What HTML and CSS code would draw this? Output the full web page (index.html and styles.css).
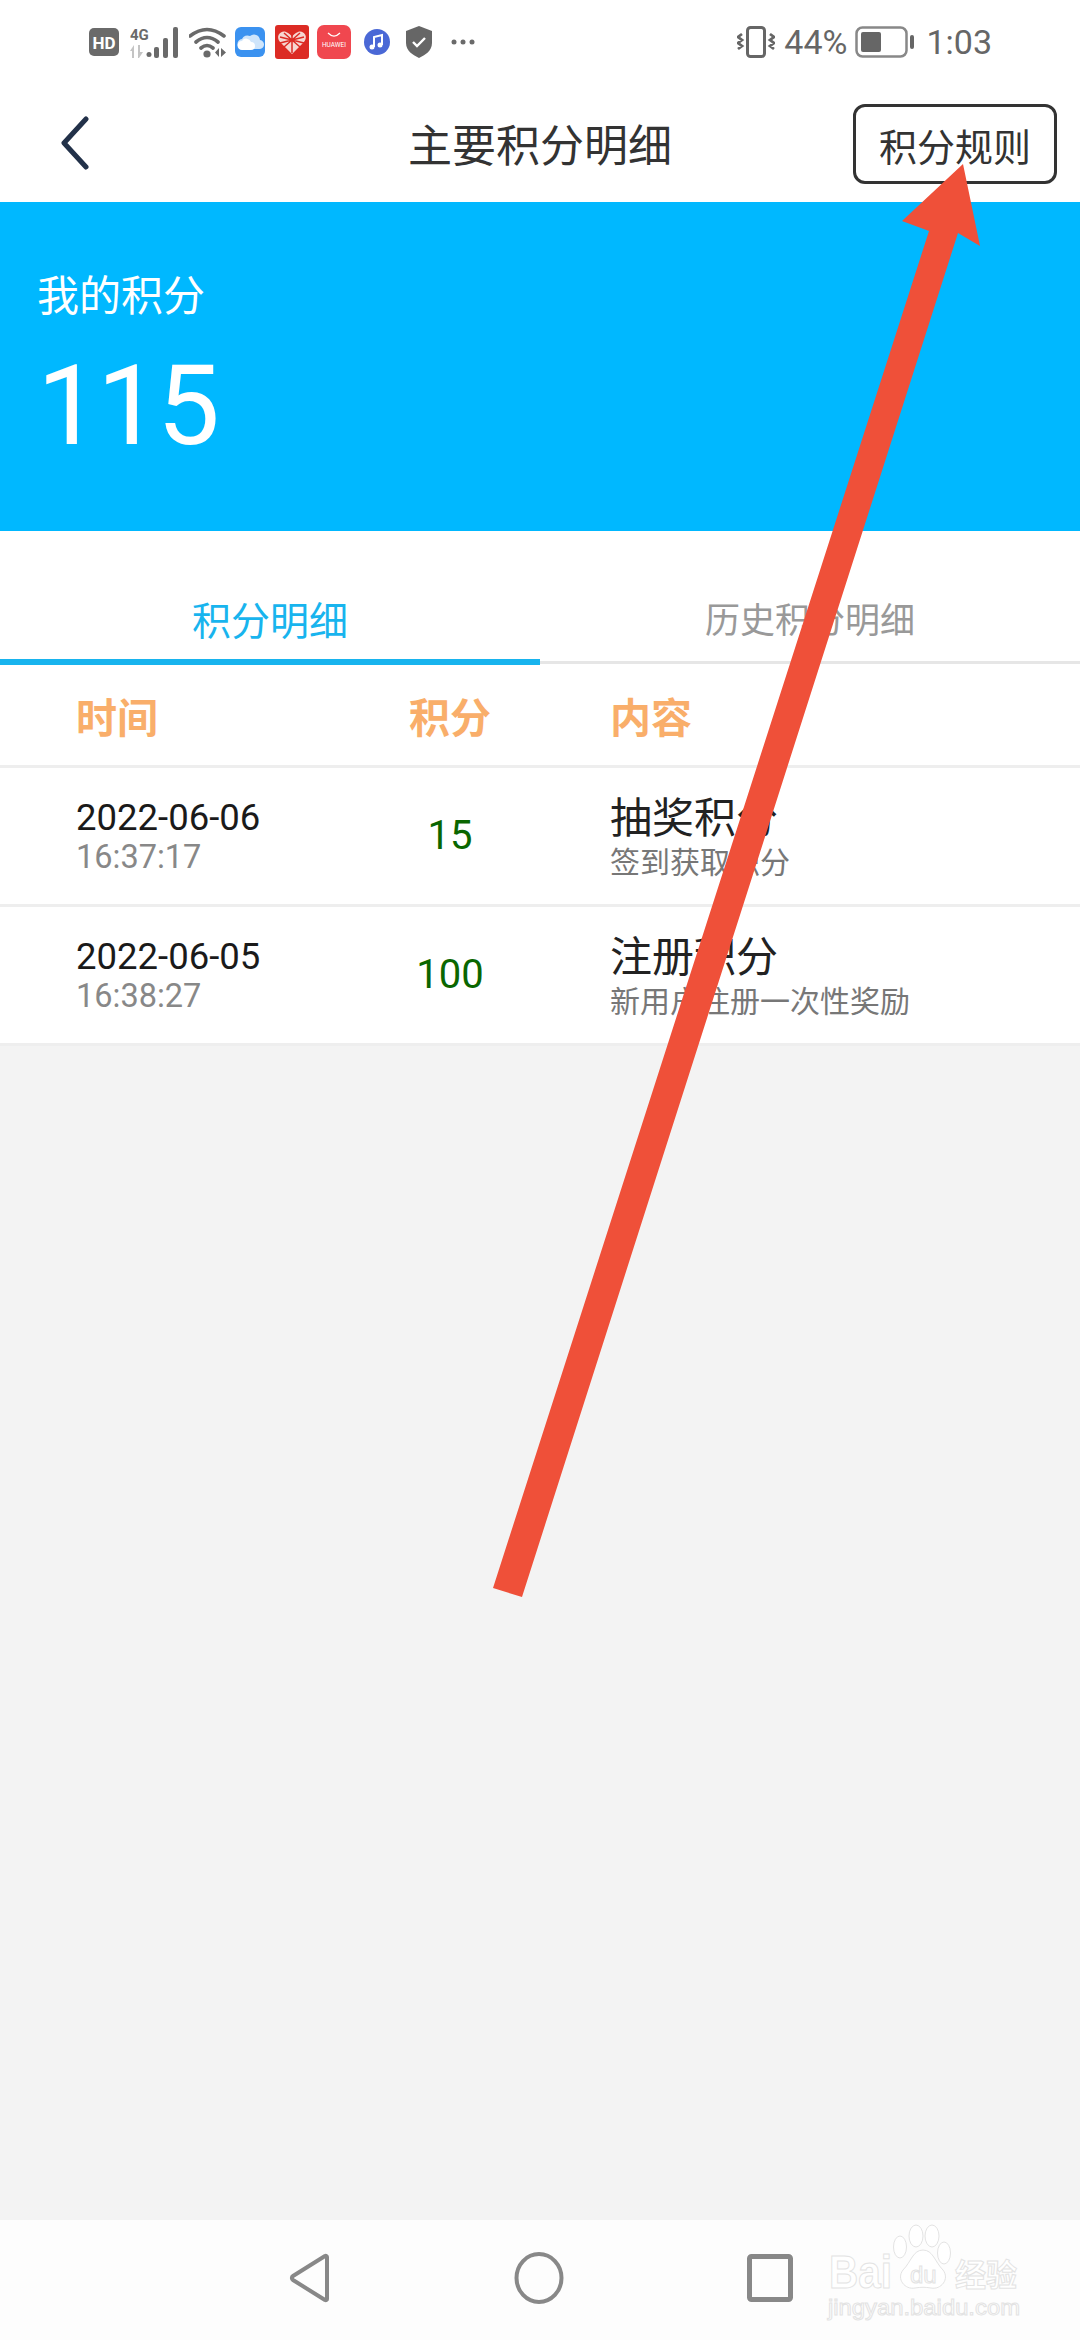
FILE: index.html
```html
<!DOCTYPE html>
<html lang="zh-CN">
<head>
<meta charset="utf-8">
<title>主要积分明细</title>
<link rel="stylesheet" href="styles.css">
</head>
<body>
<div class="page">
  <div class="status">
    <div class="status-left">
      <svg class="ic-hd" width="30" height="28" viewBox="0 0 30 28"><rect width="30" height="28" rx="5" fill="#6a6a6a"/><text x="15" y="20.500" text-anchor="middle" class="svg-hd">HD</text></svg>
      <svg class="ic-signal" width="50" height="32" viewBox="0 0 50 32"><text x="0" y="14" class="svg-4g">4G</text><path d="M0 25l4-6v13h-2v-7zM8 19h2v7l3 0-4 6h-1z" fill="#c4c4c4"/><circle cx="19" cy="28.500" r="2.500" fill="#6a6a6a"/><rect x="24" y="21" width="5" height="11" rx="2" fill="#6a6a6a"/><rect x="33" y="12" width="5" height="20" rx="2" fill="#6a6a6a"/><rect x="43" y="1" width="5" height="31" rx="2" fill="#6a6a6a"/></svg>
      <svg class="ic-wifi" width="38" height="32" viewBox="0 0 38 32"><path d="M1 10Q18-3 35 10M7 16Q18 7 29 16M12 22Q18 17 24 22" stroke="#6a6a6a" stroke-width="3.600" fill="none" stroke-linecap="round"/><circle cx="18" cy="28" r="3.600" fill="#6a6a6a"/><path d="M30 22v9l-4-4.500zM32 22v9l5-4.500z" fill="#6a6a6a"/></svg>
      <svg class="ic-cloud" width="30" height="30" viewBox="0 0 30 30"><rect width="30" height="30" rx="6" fill="#3b92f0"/><path d="M8 22a5 5 0 0 1-1-10 6 6 0 0 1 8-3 6 6 0 0 1 10 4 4.500 4.500 0 0 1-1 9z" fill="#cfe5fb"/><path d="M7 23a4.500 4.500 0 0 1 0-9 5 5 0 0 1 9 1 4 4 0 0 1 0 8z" fill="#fff"/></svg>
      <svg class="ic-heart" width="34" height="34" viewBox="0 0 34 34"><rect width="34" height="34" rx="3" fill="#dc2b24"/><path d="M17 29 5 17c-5-6 1-12 6-10 3 1 5 3 6 5 1-2 3-4 6-5 5-2 11 4 6 10z" fill="#f6d7d2"/><path d="M17 8v20M9 8l16 14M25 8 9 22M5 12l24 6M29 12 5 18" stroke="#dc2b24" stroke-width="1.500" fill="none"/></svg>
      <svg class="ic-huawei" width="34" height="34" viewBox="0 0 34 34"><rect width="34" height="34" rx="7" fill="#f0474f"/><path d="M11 8q6 6 12 0" stroke="#fff" stroke-width="1.200" fill="none"/><text x="17" y="22" text-anchor="middle" class="svg-hw">HUAWEI</text></svg>
      <svg class="ic-music" width="28" height="28" viewBox="0 0 28 28"><circle cx="14" cy="14" r="13" fill="#4a68d6"/><path d="M11 19V9l8-2v10" stroke="#fff" stroke-width="2" fill="none"/><circle cx="9" cy="19" r="2.500" fill="#fff"/><circle cx="17" cy="17" r="2.500" fill="#fff"/></svg>
      <svg class="ic-shield" width="28" height="32" viewBox="0 0 28 32"><path d="M14 0 27 5v12c0 8-7 12-13 15C8 29 1 25 1 17V5z" fill="#666"/><path d="M8 16l4 4 8-8" stroke="#fff" stroke-width="2.400" fill="none"/></svg>
      <svg class="ic-dots" width="24" height="6" viewBox="0 0 24 6"><circle cx="3" cy="3" r="2.500" fill="#6a6a6a"/><circle cx="12" cy="3" r="2.500" fill="#6a6a6a"/><circle cx="21" cy="3" r="2.500" fill="#6a6a6a"/></svg>
    </div>
    <div class="status-right">
      <svg class="ic-vib" width="38" height="32" viewBox="0 0 38 32"><rect x="10.500" y="1.500" width="17" height="29" rx="3" fill="none" stroke="#666" stroke-width="3"/><path d="M5 8 1 11l4 3-4 3 4 3-4 3M33 8l4 3-4 3 4 3-4 3 4 3" fill="none" stroke="#666" stroke-width="2.800"/></svg>
      <span class="pct">44%</span>
      <svg class="ic-batt" width="60" height="32" viewBox="0 0 60 32"><rect x="1.500" y="1.500" width="50" height="29" rx="6" fill="none" stroke="#888" stroke-width="2.500"/><rect x="6" y="6" width="20" height="20" rx="2" fill="#666"/><rect x="55" y="9" width="4" height="14" rx="2" fill="#666"/></svg>
      <span class="clock">1:03</span>
    </div>
  </div>

  <header class="nav">
    <svg class="back" width="30" height="54" viewBox="0 0 30 54"><path d="M26 3 4 27l22 24" fill="none" stroke="#223149" stroke-width="5" stroke-linecap="round" stroke-linejoin="round"/></svg>
    <h1 class="nav-title">主要积分明细</h1>
    <div class="rule-btn">积分规则</div>
  </header>

  <section class="hero">
    <div class="hero-label">我的积分</div>
    <div class="hero-value">115</div>
  </section>

  <div class="tabs">
    <div class="tab tab-on">积分明细</div>
    <div class="tab tab-off">历史积分明细</div>
  </div>

  <div class="grid head">
    <div>时间</div>
    <div class="center">积分</div>
    <div class="col3">内容</div>
  </div>
  <div class="grid row">
    <div>
      <div class="date">2022-06-06</div>
      <div class="time">16:37:17</div>
    </div>
    <div class="center score">15</div>
    <div class="col3">
      <div class="item">抽奖积分</div>
      <div class="sub">签到获取积分</div>
    </div>
  </div>
  <div class="grid row">
    <div>
      <div class="date">2022-06-05</div>
      <div class="time">16:38:27</div>
    </div>
    <div class="center score">100</div>
    <div class="col3">
      <div class="item">注册积分</div>
      <div class="sub">新用户注册一次性奖励</div>
    </div>
  </div>

  <main class="empty"></main>

  <nav class="sysnav">
    <svg width="44" height="52" viewBox="0 0 44 52"><path d="M38 4 6 24c-1.500 1-1.500 3 0 4l32 20c1 .5 2 0 2-1V5c0-1-1-1.500-2-1z" fill="none" stroke="#888" stroke-width="4" stroke-linejoin="round"/></svg>
    <svg width="50" height="52" viewBox="0 0 50 52"><ellipse cx="25" cy="26" rx="22.500" ry="24" fill="none" stroke="#888" stroke-width="4"/></svg>
    <svg width="46" height="48" viewBox="0 0 46 48"><rect x="2.500" y="2.500" width="41" height="43" rx="2" fill="none" stroke="#888" stroke-width="5"/></svg>
  </nav>

  <svg class="watermark" width="210" height="112" viewBox="0 0 210 112">
    <g class="wm">
      <text x="3" y="64" textLength="63" lengthAdjust="spacingAndGlyphs" class="wm-bai">Bai</text>
      <ellipse cx="74" cy="23" rx="6.500" ry="11"/>
      <ellipse cx="90" cy="12" rx="7" ry="11"/>
      <ellipse cx="106" cy="12" rx="7" ry="11"/>
      <ellipse cx="118" cy="29" rx="6.500" ry="11"/>
      <path d="M97 26c-10 0-12 12-20 20-7 9 2 20 12 18 6-1 10-1 16 0 10 2 19-9 12-18-8-8-10-20-20-20z"/>
      <text x="84" y="59" class="wm-du">du</text>
      <text x="129" y="62" class="wm-jy">经验</text>
      <text x="2" y="91" textLength="192" lengthAdjust="spacingAndGlyphs" class="wm-url">jingyan.baidu.com</text>
    </g>
  </svg>

  <svg class="arrow" width="1080" height="2340" viewBox="0 0 1080 2340"><path d="M493 1588 522 1597 958 233 980 246 963 164 902 221 929 231z" fill="#ef5039"/></svg>
</div>
</body>
</html>
```
FILE: styles.css
```css
* { box-sizing: border-box; }
html, body { margin: 0; padding: 0; }
body { font-family: Roboto, "Noto Sans CJK SC", sans-serif; background: #f3f3f3; }
.page { position: relative; width: 1080px; height: 2340px; display: flex; flex-direction: column; overflow: hidden; background: #f3f3f3; }

.status { height: 84px; flex: none; background: #fff; display: flex; justify-content: space-between; align-items: center; padding: 0 88px 0 89px; color: #666; }
.status-left, .status-right { display: flex; align-items: center; }
.ic-signal { margin-left: 11px; margin-right: 9px; }
.ic-wifi { margin-right: 8px; }
.ic-cloud { margin-right: 10px; }
.ic-heart { margin-right: 8px; }
.ic-huawei { margin-right: 12px; }
.ic-music { margin-right: 14px; }
.ic-shield { margin-right: 18px; }
.svg-hd { font: 700 17px Roboto, sans-serif; fill: #fff; }
.svg-4g { font: 700 15px Roboto, sans-serif; fill: #6a6a6a; }
.svg-hw { font: 400 6.500px Roboto, sans-serif; fill: #fff; }
.pct { font-size: 34px; margin-left: 9px; margin-right: 8px; line-height: 40px; }
.clock { font-size: 34px; margin-left: 11px; line-height: 40px; }

.nav { height: 118px; flex: none; background: #fff; display: flex; align-items: center; justify-content: space-between; padding: 0 23px 0 60px; position: relative; }
.nav-title { position: absolute; left: 0; right: 0; margin: 0; text-align: center; font-size: 44px; font-weight: 400; color: #333; line-height: 60px; font-family: "Noto Sans CJK SC", sans-serif; pointer-events: none; }
.rule-btn { width: 204px; height: 80px; border: 3px solid #333; border-radius: 12px; display: flex; align-items: center; justify-content: center; font-size: 38px; color: #333; font-family: "Noto Sans CJK SC", sans-serif; margin-top: 2px; }

.hero { height: 329px; flex: none; background: #00b8ff; color: #fff; padding: 62px 0 0 37px; }
.hero-label { font-size: 42px; line-height: 58px; font-family: "Noto Sans CJK SC", sans-serif; }
.hero-value { font-size: 112px; line-height: 112px; margin-top: 28px; letter-spacing: -3px; }

.tabs { height: 134px; flex: none; background: #fff; display: flex; align-items: flex-start; font-family: "Noto Sans CJK SC", sans-serif; }
.tab { flex: 1; text-align: center; padding-top: 62px; line-height: 50px; }
.tab-on { height: 134px; color: #18b4ee; font-size: 39px; border-bottom: 6px solid #18b4ee; }
.tab-off { height: 133px; color: #999; font-size: 35px; border-bottom: 3px solid #e6e6e6; }

.grid { display: grid; grid-template-columns: 256px 236px 1fr; padding-left: 76px; background: #fff; align-items: center; border-bottom: 3px solid #eee; }
.center { text-align: center; }
.col3 { padding-left: 42px; }
.head { height: 103px; font-size: 41px; font-weight: 700; color: #f9ae6a; font-family: "Noto Sans CJK SC", sans-serif; }
.row { height: 139px; }
.date { font-size: 36.500px; line-height: 42px; color: #1a1a1a; margin-top: 1px; }
.time { font-size: 32.500px; line-height: 40px; color: #888; margin-top: -2px; }
.score { font-size: 40px; color: #0a6600; margin-top: -2px; }
.item { font-size: 42px; line-height: 52px; color: #222; font-family: "Noto Sans CJK SC", sans-serif; margin-top: -4px; }
.sub { font-size: 30px; line-height: 38px; color: #777; font-family: "Noto Sans CJK SC", sans-serif; }

.empty { flex: 1; background: #f3f3f3; }

.sysnav { height: 120px; flex: none; background: #fdfdfd; display: flex; align-items: center; justify-content: center; gap: 183px; padding-bottom: 5px; }

.watermark { position: absolute; left: 826px; top: 2224px; }
.wm { fill: #fff; stroke: #e3e3e3; stroke-width: 1; }
.wm-bai { font: 700 46px "Liberation Sans", sans-serif; }
.wm-du { font: 400 24px "Liberation Sans", sans-serif; }
.wm-jy { font: 700 31px "Noto Sans CJK SC", sans-serif; }
.wm-url { font: 400 22px "Liberation Sans", sans-serif; }

.arrow { position: absolute; left: 0; top: 0; pointer-events: none; }
```
